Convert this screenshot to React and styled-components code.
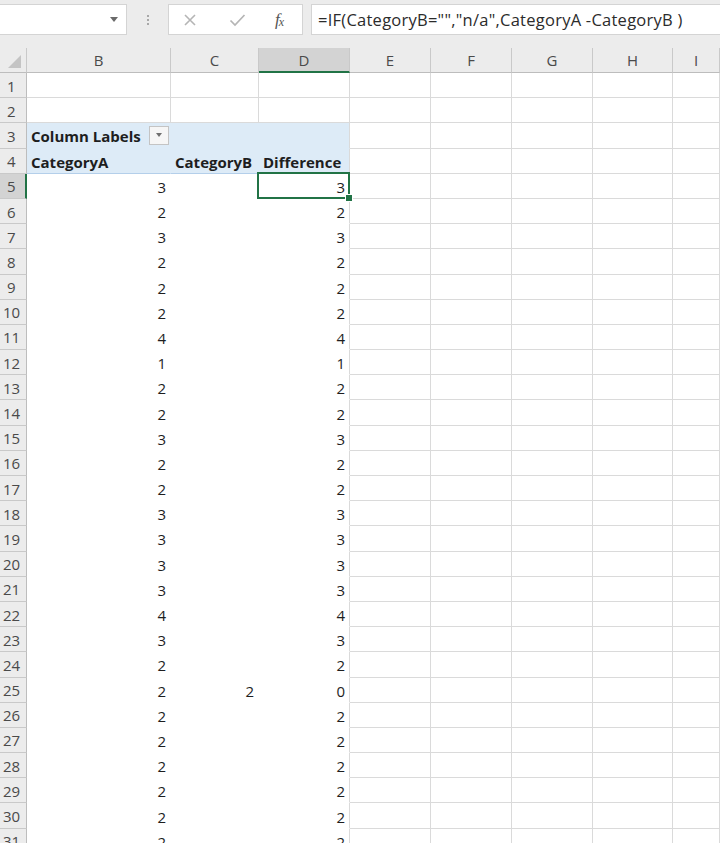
import React from "react";
import styled, { createGlobalStyle, css } from "styled-components";

const GlobalStyle = createGlobalStyle`
  html, body { margin: 0; padding: 0; background: #ffffff; }
  body { font-family: "Open Sans", "Liberation Sans", sans-serif; }
  * { box-sizing: border-box; }
`;

const GRID = "#dadada";
const HEAD_LINE = "#c9c9c9";
const GREEN = "#217346";
const PIVOT = "#ddebf7";

const Page = styled.div`
  width: 720px;
  height: 843px;
  overflow: hidden;
  background: #ffffff;
  display: flex;
  flex-direction: column;
`;

const FormulaBar = styled.div`
  height: 48px;
  flex: none;
  background: #ececec;
  display: flex;
  align-items: flex-start;
  padding-top: 4px;
`;

const NameBox = styled.div`
  width: 128px;
  height: 31px;
  margin-left: -1px;
  background: #fff;
  border: 1px solid #d4d4d4;
  display: flex;
  align-items: center;
  justify-content: flex-end;
  padding-right: 8px;
`;

const Caret = styled.span`
  width: 0;
  height: 0;
  border-left: 4px solid transparent;
  border-right: 4px solid transparent;
  border-top: 5px solid #6a6a6a;
`;

const Grip = styled.div`
  width: 41px;
  height: 31px;
  display: flex;
  flex-direction: column;
  align-items: center;
  justify-content: center;
  gap: 2px;
`;

const GripDot = styled.span`
  width: 2px;
  height: 2px;
  background: #a8a8a8;
`;

const FuncBox = styled.div`
  width: 135px;
  height: 31px;
  background: #fff;
  border: 1px solid #d4d4d4;
  display: flex;
  align-items: center;
  padding-left: 14px;
`;

const FuncIcon = styled.span`
  width: ${(p) => p.$w || 46}px;
  display: flex;
  align-items: center;
  justify-content: ${(p) => p.$justify || "flex-start"};
  color: #5f5f5f;
`;

const Fx = styled.span`
  font-family: "Liberation Serif", "DejaVu Serif", serif;
  font-style: italic;
  font-size: 17px;
  color: #555;
  letter-spacing: -1px;
  sub {
    font-size: 12px;
    vertical-align: -1px;
  }
`;

const FormulaInput = styled.div`
  flex: 1;
  height: 31px;
  margin-left: 8px;
  margin-right: -2px;
  background: #fff;
  border: 1px solid #d4d4d4;
  display: flex;
  align-items: center;
  padding-left: 6px;
  font-size: 16.5px;
  letter-spacing: 0.25px;
  color: #2b2b2b;
  white-space: nowrap;
`;

const Sheet = styled.div`
  display: grid;
  grid-template-columns: 27px 144px 88px 91px 81px 81px 81px 80px 1fr;
  grid-template-rows: 25px;
  grid-auto-rows: 25.2px;
  flex: none;
`;

const headerBase = css`
  background: #ececec;
  color: #4a4a4a;
  font-size: 15px;
  display: flex;
  align-items: center;
  justify-content: center;
  position: relative;
`;

const Corner = styled.div`
  ${headerBase};
  border-right: 1px solid ${HEAD_LINE};
  border-bottom: 1px solid #bdbdbd;
  justify-content: flex-end;
  align-items: flex-end;
  padding: 0 5px 4px 0;
`;

const CornerTri = styled.span`
  width: 0;
  height: 0;
  border-left: 13px solid transparent;
  border-bottom: 13px solid #c4c4c4;
`;

const ColHeader = styled.div`
  ${headerBase};
  border-right: 1px solid ${HEAD_LINE};
  border-bottom: 1px solid #bdbdbd;
  ${(p) =>
    p.$selected &&
    css`
      background: #d3d3d3;
      border-bottom: 2px solid ${GREEN};
    `}
`;

const RowHeader = styled.div`
  ${headerBase};
  justify-content: flex-start;
  padding-left: ${(p) => (p.$wide ? 3 : 7)}px;
  border-right: 1px solid #bdbdbd;
  border-bottom: 1px solid ${HEAD_LINE};
  padding-top: 1px;
  ${(p) =>
    p.$selected &&
    css`
      background: #d3d3d3;
      border-right: 2px solid ${GREEN};
    `}
`;

const Cell = styled.div`
  position: relative;
  display: flex;
  align-items: center;
  justify-content: ${(p) => (p.$align === "right" ? "flex-end" : "space-between")};
  padding: 2px 4px 0 4px;
  font-size: 15px;
  font-weight: ${(p) => (p.$bold ? 700 : 400)};
  color: #1e1e1e;
  white-space: nowrap;
  background: ${(p) => (p.$fill ? PIVOT : "#fff")};
  border-right: 1px solid ${(p) => (p.$noRight ? "transparent" : GRID)};
  border-bottom: 1px solid
    ${(p) => (p.$bottom === "none" ? "transparent" : p.$bottom === "pivot" ? "#b4cfea" : GRID)};
  ${(p) =>
    p.$fill &&
    p.$noRight &&
    css`
      border-right-color: ${PIVOT};
    `}
  ${(p) =>
    p.$active &&
    css`
      &::after {
        content: "";
        position: absolute;
        left: -2px;
        top: -2px;
        right: -1px;
        bottom: -1px;
        border: 2px solid ${GREEN};
        pointer-events: none;
      }
      &::before {
        content: "";
        position: absolute;
        right: -4px;
        bottom: -4px;
        width: 6px;
        height: 6px;
        background: ${GREEN};
        border: 1px solid #fff;
        z-index: 2;
      }
    `}
`;

const FilterButton = styled.span`
  width: 20px;
  height: 19px;
  margin-right: -3px;
  margin-top: -2px;
  border: 1px solid #c4c4c4;
  background: #f6f6f6;
  display: flex;
  align-items: center;
  justify-content: center;
`;

const FilterCaret = styled.span`
  width: 0;
  height: 0;
  border-left: 3.5px solid transparent;
  border-right: 3.5px solid transparent;
  border-top: 4px solid #6f6f6f;
`;

const COLS = ["B", "C", "D", "E", "F", "G", "H", "I"];

const data = [
  3, 2, 3, 2, 2, 2, 4, 1, 2, 2, 3, 2, 2, 3, 3, 3, 3, 4, 3, 2, 2, 2, 2, 2, 2, 2, 2,
];

function pivotRow(r) {
  if (r === 3) return [{ text: "Column Labels", bold: true, filter: true }, {}, {}];
  if (r === 4)
    return [
      { text: "CategoryA", bold: true },
      { text: "CategoryB", bold: true },
      { text: "Difference", bold: true },
    ];
  if (r >= 5) {
    const a = data[r - 5];
    if (a === undefined) return [{}, {}, {}];
    const b = r === 25 ? 2 : "";
    const d = r === 25 ? 0 : a;
    return [
      { text: a, align: "right" },
      { text: b, align: "right" },
      { text: d, align: "right" },
    ];
  }
  return [{}, {}, {}];
}

function Row({ r }) {
  const pivot = pivotRow(r);
  const inPivot = r >= 3;
  return (
    <>
      <RowHeader $selected={r === 5} $wide={r >= 10}>
        {r}
      </RowHeader>
      {COLS.map((c, i) => {
        if (i < 3 && inPivot) {
          const p = pivot[i];
          const fill = r === 3 || r === 4;
          const bottom = r === 4 ? "pivot" : "none";
          return (
            <Cell
              key={c}
              $fill={fill}
              $noRight={i < 2}
              $bottom={bottom}
              $bold={p.bold}
              $align={p.align}
              $active={r === 5 && c === "D"}
            >
              {p.text !== undefined && p.text !== "" ? <span>{p.text}</span> : null}
              {p.filter && (
                <FilterButton>
                  <FilterCaret />
                </FilterButton>
              )}
            </Cell>
          );
        }
        return <Cell key={c} />;
      })}
    </>
  );
}

export default function App() {
  const rows = Array.from({ length: 31 }, (_, i) => i + 1);
  return (
    <>
      <GlobalStyle />
      <Page>
        <FormulaBar>
          <NameBox>
            <Caret />
          </NameBox>
          <Grip>
            <GripDot />
            <GripDot />
            <GripDot />
          </Grip>
          <FuncBox>
            <FuncIcon $w={46}>
              <svg width="14" height="14" viewBox="0 0 14 14">
                <path d="M2 2 L12 12 M12 2 L2 12" stroke="#b5b5b5" strokeWidth="1.6" fill="none" />
              </svg>
            </FuncIcon>
            <FuncIcon $w={46}>
              <svg width="17" height="14" viewBox="0 0 17 14">
                <path d="M1.5 7.5 L6 12 L15.5 2" stroke="#b5b5b5" strokeWidth="1.7" fill="none" />
              </svg>
            </FuncIcon>
            <FuncIcon $w={24}>
              <Fx>
                f<sub>x</sub>
              </Fx>
            </FuncIcon>
          </FuncBox>
          <FormulaInput>=IF(CategoryB="","n/a",CategoryA -CategoryB )</FormulaInput>
        </FormulaBar>
        <Sheet>
          <Corner>
            <CornerTri />
          </Corner>
          {COLS.map((c) => (
            <ColHeader key={c} $selected={c === "D"}>
              {c}
            </ColHeader>
          ))}
          {rows.map((r) => (
            <Row key={r} r={r} />
          ))}
        </Sheet>
      </Page>
    </>
  );
}
